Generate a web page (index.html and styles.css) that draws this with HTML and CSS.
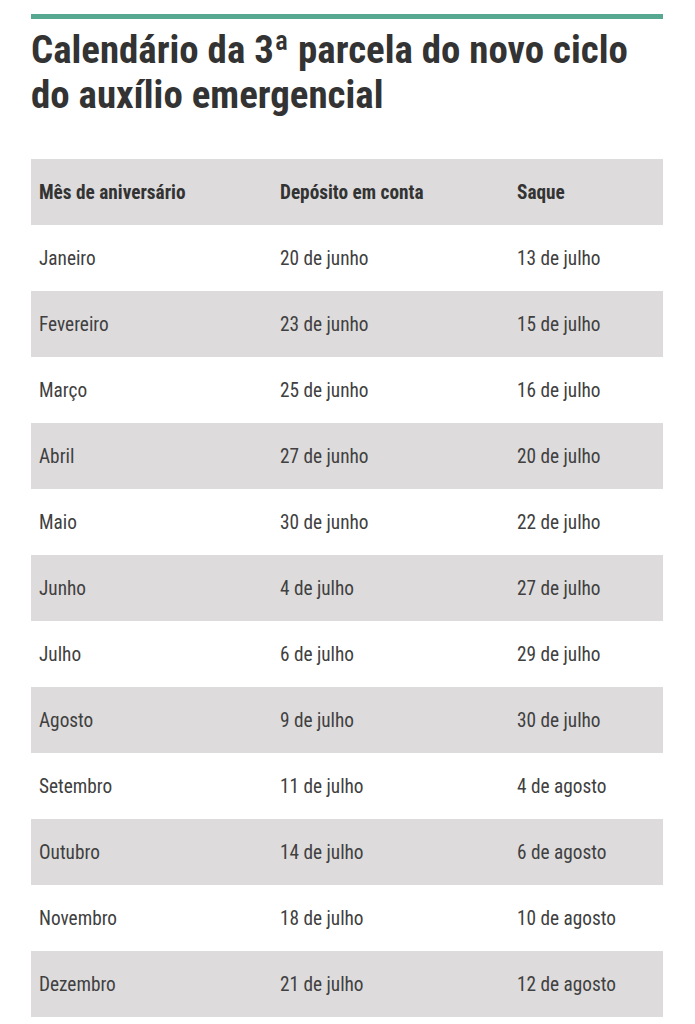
FILE: index.html
```html
<!DOCTYPE html>
<html lang="pt-BR">
<head>
<meta charset="utf-8">
<title>Calendário da 3ª parcela</title>
<link rel="stylesheet" href="styles.css">
</head>
<body>
<main class="page">
  <div class="rule"></div>
  <h1 class="title">Calendário da 3ª parcela do novo ciclo do auxílio emergencial</h1>
  <table class="cal">
    <thead>
      <tr><th class="c1">Mês de aniversário</th><th class="c2">Depósito em conta</th><th class="c3">Saque</th></tr>
    </thead>
    <tbody>
      <tr><td>Janeiro</td><td>20 de junho</td><td>13 de julho</td></tr>
      <tr><td>Fevereiro</td><td>23 de junho</td><td>15 de julho</td></tr>
      <tr><td>Março</td><td>25 de junho</td><td>16 de julho</td></tr>
      <tr><td>Abril</td><td>27 de junho</td><td>20 de julho</td></tr>
      <tr><td>Maio</td><td>30 de junho</td><td>22 de julho</td></tr>
      <tr><td>Junho</td><td>4 de julho</td><td>27 de julho</td></tr>
      <tr><td>Julho</td><td>6 de julho</td><td>29 de julho</td></tr>
      <tr><td>Agosto</td><td>9 de julho</td><td>30 de julho</td></tr>
      <tr><td>Setembro</td><td>11 de julho</td><td>4 de agosto</td></tr>
      <tr><td>Outubro</td><td>14 de julho</td><td>6 de agosto</td></tr>
      <tr><td>Novembro</td><td>18 de julho</td><td>10 de agosto</td></tr>
      <tr><td>Dezembro</td><td>21 de julho</td><td>12 de agosto</td></tr>
    </tbody>
  </table>
</main>
</body>
</html>
```
FILE: styles.css
```css
html, body {
  margin: 0;
  padding: 0;
  background: #ffffff;
}
.page {
  width: 632px;
  margin-left: 31px;
  padding-top: 14px;
  font-family: "Roboto Condensed", Roboto, "Liberation Sans", sans-serif;
  font-stretch: condensed;
  color: #404040;
}
.rule {
  height: 5px;
  background: #56a891;
}
.title {
  margin: 8px 0 0 0;
  font-size: 38.9px;
  line-height: 45px;
  font-weight: 700;
  color: #333333;
}
.cal {
  margin-top: 42px;
  width: 632px;
  border-collapse: collapse;
  table-layout: fixed;
  font-size: 19.3px;
}
.cal th, .cal td {
  height: 66px;
  padding: 0 8px;
  text-align: left;
  vertical-align: middle;
  box-sizing: border-box;
  font-weight: 400;
}
.cal th {
  font-weight: 700;
  color: #333333;
}
.c1 { width: 241px; }
.c2 { width: 237px; }
.c3 { width: 154px; }
.cal thead tr, .cal tbody tr:nth-child(even) {
  background: #dddbdc;
}
```
